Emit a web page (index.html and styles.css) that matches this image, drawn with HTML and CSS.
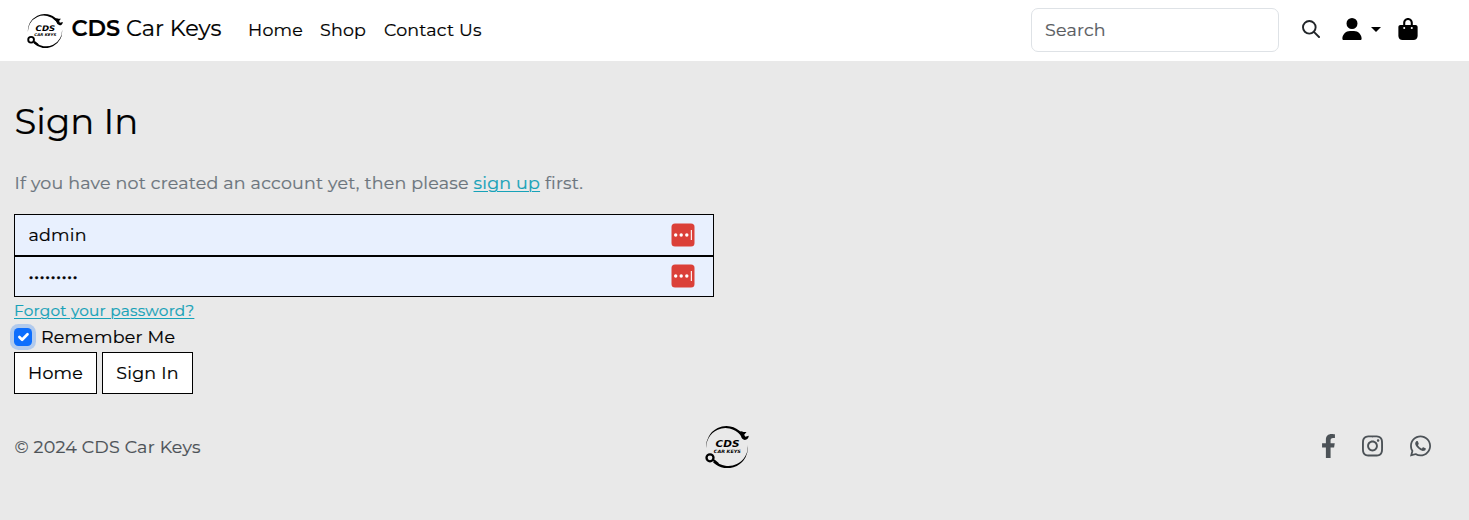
FILE: index.html
```html
<!DOCTYPE html>
<html lang="en">
<head>
<meta charset="utf-8">
<title>CDS Car Keys - Sign In</title>
<link rel="stylesheet" href="styles.css">
</head>
<body>
<header class="navbar">
  <a class="brand">
    <svg class="brand-logo" viewBox="0 0 44 42" preserveAspectRatio="none">
      <path d="M1.300 23.500A20.500 20.500 0 0 1 36.500 6.500L35 8.600A19.300 19.300 0 0 0 1.300 23.500Z"/>
      <path d="M42.700 18.500A20.500 20.500 0 0 1 8 36.200L9.800 34.400A19.400 19.400 0 0 0 42.700 18.500Z"/>
      <path d="M33.500 6 36.500 5.200 38.500 6 41.500 6 39.200 8.800 40.300 10.800 43.800 9.800Q43.300 13.800 39.800 14 36.800 13.600 36 10.300Z"/>
      <circle cx="5" cy="31.800" r="3.500" fill="none" stroke="currentColor" stroke-width="2.300"/>
      <path d="M7.500 34.600 9.500 33.500 14 37.200 12 38.600Z"/>
      <text class="logo-name" x="10.500" y="20.800" textLength="24" lengthAdjust="spacingAndGlyphs">CDS</text>
      <text class="logo-sub" x="8.800" y="26.800" textLength="27" lengthAdjust="spacingAndGlyphs">CAR KEYS</text>
    </svg>
    <span class="brand-text"><b>CDS</b> Car Keys</span>
  </a>
  <nav class="nav">
    <a class="nav-home">Home</a><a class="nav-shop">Shop</a><a class="nav-contact">Contact Us</a>
  </nav>
  <div class="tools">
    <input class="search" type="text" placeholder="Search" aria-label="Search">
    <svg class="icon-search" viewBox="0 0 512 512"><circle cx="208" cy="208" r="180"/><path d="M338 338 484 484"/></svg>
    <svg class="icon-user" viewBox="0 0 448 512"><path d="M224 256A128 128 0 1 0 224 0a128 128 0 1 0 0 256zm-45.700 48C79.800 304 0 383.800 0 482.300C0 498.700 13.300 512 29.700 512H418.300c16.400 0 29.700-13.300 29.700-29.700C448 383.800 368.200 304 269.700 304H178.300z"/></svg>
    <span class="caret"></span>
    <svg class="icon-bag" viewBox="0 0 448 512"><path d="M160 112c0-35.300 28.700-64 64-64s64 28.700 64 64v48H160V112zm-48 48H48c-26.500 0-48 21.500-48 48V416c0 53 43 96 96 96H352c53 0 96-43 96-96V208c0-26.500-21.500-48-48-48H336V112C336 50.100 285.900 0 224 0S112 50.100 112 112v48zm24 48a24 24 0 1 1 0 48 24 24 0 1 1 0-48zm152 24a24 24 0 1 1 48 0 24 24 0 1 1 -48 0z"/></svg>
  </div>
</header>
<main class="content">
  <h1 class="title">Sign In</h1>
  <p class="lead">If you have not created an account yet, then please <a class="link">sign up</a> first.</p>
  <form class="form">
    <div class="field field-user">
      <input class="control" type="text" value="admin" aria-label="Username">
      <svg class="filler" viewBox="0 0 24 24"><rect class="filler-box" x=".5" y=".5" width="23" height="23" rx="3.500"/><circle cx="4.700" cy="12" r="1.700"/><circle cx="10.200" cy="12" r="1.700"/><circle cx="15.800" cy="12" r="1.700"/><rect x="19.800" y="7" width="1.100" height="10"/></svg>
    </div>
    <div class="field field-pass">
      <input class="control control-pass" type="password" value="adminpass" aria-label="Password">
      <svg class="filler" viewBox="0 0 24 24"><rect class="filler-box" x=".5" y=".5" width="23" height="23" rx="3.500"/><circle cx="4.700" cy="12" r="1.700"/><circle cx="10.200" cy="12" r="1.700"/><circle cx="15.800" cy="12" r="1.700"/><rect x="19.800" y="7" width="1.100" height="10"/></svg>
    </div>
    <a class="link forgot">Forgot your password?</a>
    <label class="remember"><span class="check"><svg viewBox="0 0 20 20"><path d="m6 10 3 3 6-6"/></svg></span><span>Remember Me</span></label>
    <div class="actions"><a class="btn btn-home">Home</a><a class="btn btn-sign">Sign In</a></div>
  </form>
</main>
<footer class="footer">
  <span class="copy">© 2024 CDS Car Keys</span>
  <svg class="footer-logo" viewBox="0 0 44 42">
    <path d="M1.300 23.500A20.500 20.500 0 0 1 36.500 6.500L35 8.600A19.300 19.300 0 0 0 1.300 23.500Z"/>
    <path d="M42.700 18.500A20.500 20.500 0 0 1 8 36.200L9.800 34.400A19.400 19.400 0 0 0 42.700 18.500Z"/>
    <path d="M33.500 6 36.500 5.200 38.500 6 41.500 6 39.200 8.800 40.300 10.800 43.800 9.800Q43.300 13.800 39.800 14 36.800 13.600 36 10.300Z"/>
    <circle cx="5" cy="31.800" r="3.500" fill="none" stroke="currentColor" stroke-width="2.300"/>
    <path d="M7.500 34.600 9.500 33.500 14 37.200 12 38.600Z"/>
    <text class="logo-name" x="10.500" y="20.800" textLength="24" lengthAdjust="spacingAndGlyphs">CDS</text>
    <text class="logo-sub" x="8.800" y="26.800" textLength="27" lengthAdjust="spacingAndGlyphs">CAR KEYS</text>
  </svg>
  <div class="social">
    <svg class="fb" viewBox="0 0 320 512"><path d="M279.140 288l14.220-92.660h-88.910v-60.130c0-25.350 12.420-50.060 52.240-50.060h40.420V6.260S260.430 0 225.360 0c-73.220 0-121.080 44.380-121.080 124.720v70.620H22.890V288h81.390v224h100.170V288z"/></svg>
    <svg class="ig" viewBox="0 0 448 512"><path d="M224.100 141c-63.600 0-114.900 51.300-114.900 114.900s51.300 114.900 114.900 114.900S339 319.500 339 255.900 287.700 141 224.100 141zm0 189.600c-41.100 0-74.700-33.500-74.700-74.700s33.500-74.700 74.700-74.700 74.700 33.500 74.700 74.700-33.600 74.700-74.700 74.700zm146.400-194.300c0 14.900-12 26.800-26.800 26.800-14.900 0-26.800-12-26.800-26.800s12-26.800 26.800-26.800 26.800 12 26.800 26.800zm76.100 27.200c-1.700-35.900-9.900-67.700-36.200-93.900-26.200-26.200-58-34.400-93.900-36.200-37-2.100-147.900-2.100-184.900 0-35.800 1.700-67.600 9.900-93.900 36.100s-34.400 58-36.200 93.900c-2.100 37-2.100 147.900 0 184.900 1.700 35.900 9.900 67.700 36.200 93.900s58 34.400 93.900 36.200c37 2.100 147.900 2.100 184.900 0 35.900-1.700 67.700-9.900 93.900-36.200 26.200-26.200 34.400-58 36.200-93.900 2.100-37 2.100-147.800 0-184.800zM398.800 388c-7.800 19.600-22.900 34.700-42.600 42.600-29.500 11.700-99.500 9-132.100 9s-102.700 2.600-132.100-9c-19.600-7.800-34.700-22.900-42.600-42.600-11.700-29.500-9-99.500-9-132.100s-2.600-102.700 9-132.100c7.800-19.600 22.900-34.700 42.600-42.600 29.500-11.700 99.500-9 132.100-9s102.700-2.600 132.100 9c19.600 7.800 34.700 22.900 42.600 42.600 11.700 29.500 9 99.500 9 132.100s2.700 102.700-9 132.100z"/></svg>
    <svg class="wa" viewBox="0 0 448 512"><path d="M380.900 97.100C339 55.100 283.200 32 223.900 32c-122.400 0-222 99.600-222 222 0 39.100 10.200 77.300 29.600 111L0 480l117.700-30.900c32.400 17.700 68.900 27 106.100 27h.1c122.300 0 224.100-99.600 224.100-222 0-59.300-25.200-115-67.100-157zm-157 341.600c-33.200 0-65.700-8.900-94-25.700l-6.700-4-69.800 18.300L72 359.200l-4.400-7c-18.500-29.400-28.200-63.300-28.200-98.200 0-101.700 82.800-184.500 184.600-184.500 49.300 0 95.600 19.200 130.400 54.100 34.800 34.900 56.200 81.200 56.100 130.500 0 101.800-84.900 184.600-186.600 184.600zm101.200-138.200c-5.500-2.800-32.800-16.200-37.900-18-5.100-1.900-8.800-2.800-12.500 2.800-3.700 5.600-14.300 18-17.600 21.800-3.200 3.700-6.500 4.200-12 1.400-32.600-16.300-54-29.100-75.500-66-5.700-9.800 5.700-9.100 16.300-30.300 1.800-3.700.9-6.900-.5-9.700-1.400-2.800-12.500-30.100-17.100-41.200-4.500-10.800-9.100-9.300-12.500-9.500-3.200-.2-6.900-.2-10.600-.2-3.700 0-9.700 1.400-14.800 6.900-5.100 5.600-19.400 19-19.400 46.300 0 27.300 19.900 53.700 22.600 57.400 2.800 3.700 39.100 59.700 94.800 83.800 35.200 15.200 49 16.500 66.600 13.900 10.700-1.600 32.800-13.400 37.400-26.400 4.600-13 4.600-24.100 3.200-26.800-1.300-2.500-5-3.900-10.500-6.600z"/></svg>
  </div>
</footer>
</body>
</html>
```
FILE: styles.css
```css
* { box-sizing: border-box; }
body {
  margin: 0;
  min-height: 520px;
  background: #e9e9e9;
  color: #000;
  font: 400 17.450px/27px Montserrat, Inter, sans-serif;
  letter-spacing: 0.220px;
  -webkit-text-stroke: 0.200px;
}
svg { display: block; flex: none; fill: currentColor; -webkit-text-stroke: 0; }
.logo-name { font: italic 900 9.500px "DejaVu Sans", sans-serif; letter-spacing: 0; }
.logo-sub { font: italic 900 4.500px "DejaVu Sans", sans-serif; letter-spacing: 0; }

.navbar { display: flex; align-items: center; height: 61px; padding: 0 51px 0 27px; background: #fff; }
.brand { display: flex; align-items: center; gap: 8px; width: 221px; font-size: 22.400px; letter-spacing: 0; white-space: nowrap; }
.brand-logo { width: 36px; height: 34px; }
.brand-text { padding: 0 0 4px 0.500px; }
.brand b { font-weight: 600; }
.nav { display: flex; gap: 18px; padding-bottom: 2px; white-space: nowrap; }
.nav-home { width: 54px; }
.nav-shop { width: 46px; }
.tools { display: flex; align-items: center; margin-left: auto; padding-bottom: 3px; }
.search {
  width: 248px; height: 44px; margin-top: 2px; padding: 0 13px 1px;
  border: 1px solid #dee2e6; border-radius: 7px;
  background: #fff; font: inherit; letter-spacing: inherit;
}
.search::placeholder { color: #595c5f; opacity: 1; }
.icon-search { width: 18px; height: 18px; margin-left: 23px; color: #212529; fill: none; stroke: currentColor; stroke-width: 54; stroke-linecap: round; }
.icon-user { width: 20px; height: 22px; margin-left: 22px; }
.caret { margin-left: 9px; border: 5px solid transparent; border-top-color: #000; border-bottom: 0; }
.icon-bag { width: 20px; height: 22px; margin-left: 17px; }

.content { padding: 39px 14px 0; }
.title { margin: 0 0 26px; padding-left: 0.500px; font-size: 35.500px; font-weight: 400; letter-spacing: 0; line-height: 43px; }
.lead { margin: 0 0 18px; padding-left: 0.500px; color: #6c757d; }
.link { color: #17a2b8; text-decoration: underline; text-decoration-thickness: 1px; text-underline-offset: 2px; }
.form { width: 700px; }
.field { display: flex; align-items: center; padding: 0 18px 0 13.500px; border: 1px solid #000; background: #e8f0fe; }
.field-user { height: 42px; }
.field-pass { height: 41px; padding-bottom: 1px; }
.control { flex: 1; min-width: 0; height: 27px; margin-bottom: 1px; padding: 0; border: 0; outline: 0; background: transparent; color: #000; font: inherit; letter-spacing: inherit; }
.control-pass { margin-bottom: 2px; letter-spacing: 0.350px; -webkit-text-stroke: 0.400px; }
.filler { width: 24px; height: 24px; fill: #fff; }
.filler-box { fill: #db4039; }
.forgot { display: block; width: max-content; font-size: 15.350px; }
.remember { display: flex; align-items: center; gap: 9px; height: 27px; margin-top: -1px; }
.check { width: 18px; height: 18px; border-radius: 4.500px; background: #0d6efd; box-shadow: 0 0 0 4px rgba(13, 110, 253, .25); }
.check path { fill: none; stroke: #fff; stroke-width: 3; stroke-linecap: round; stroke-linejoin: round; }
.actions { display: flex; gap: 5px; margin-top: 2px; }
.btn { display: flex; align-items: center; justify-content: center; height: 42px; padding-bottom: 1px; border: 1px solid #000; background: #fff; }
.btn-home { width: 83px; }
.btn-sign { width: 91px; }

.footer { display: grid; grid-template-columns: 691px 44px 1fr; align-items: center; height: 44px; margin-top: 31px; padding: 0 38px 0 14px; color: #4c5257; }
.copy { padding: 0 0 2px 0.500px; }
.footer-logo { width: 44px; height: 42px; color: #000; }
.social { display: flex; justify-content: flex-end; align-items: center; padding-bottom: 2px; }
.social svg { height: 24px; width: 21px; }
.social .fb { width: 15px; }
.social .ig { margin-left: 26px; }
.social .wa { margin-left: 27px; }
```
